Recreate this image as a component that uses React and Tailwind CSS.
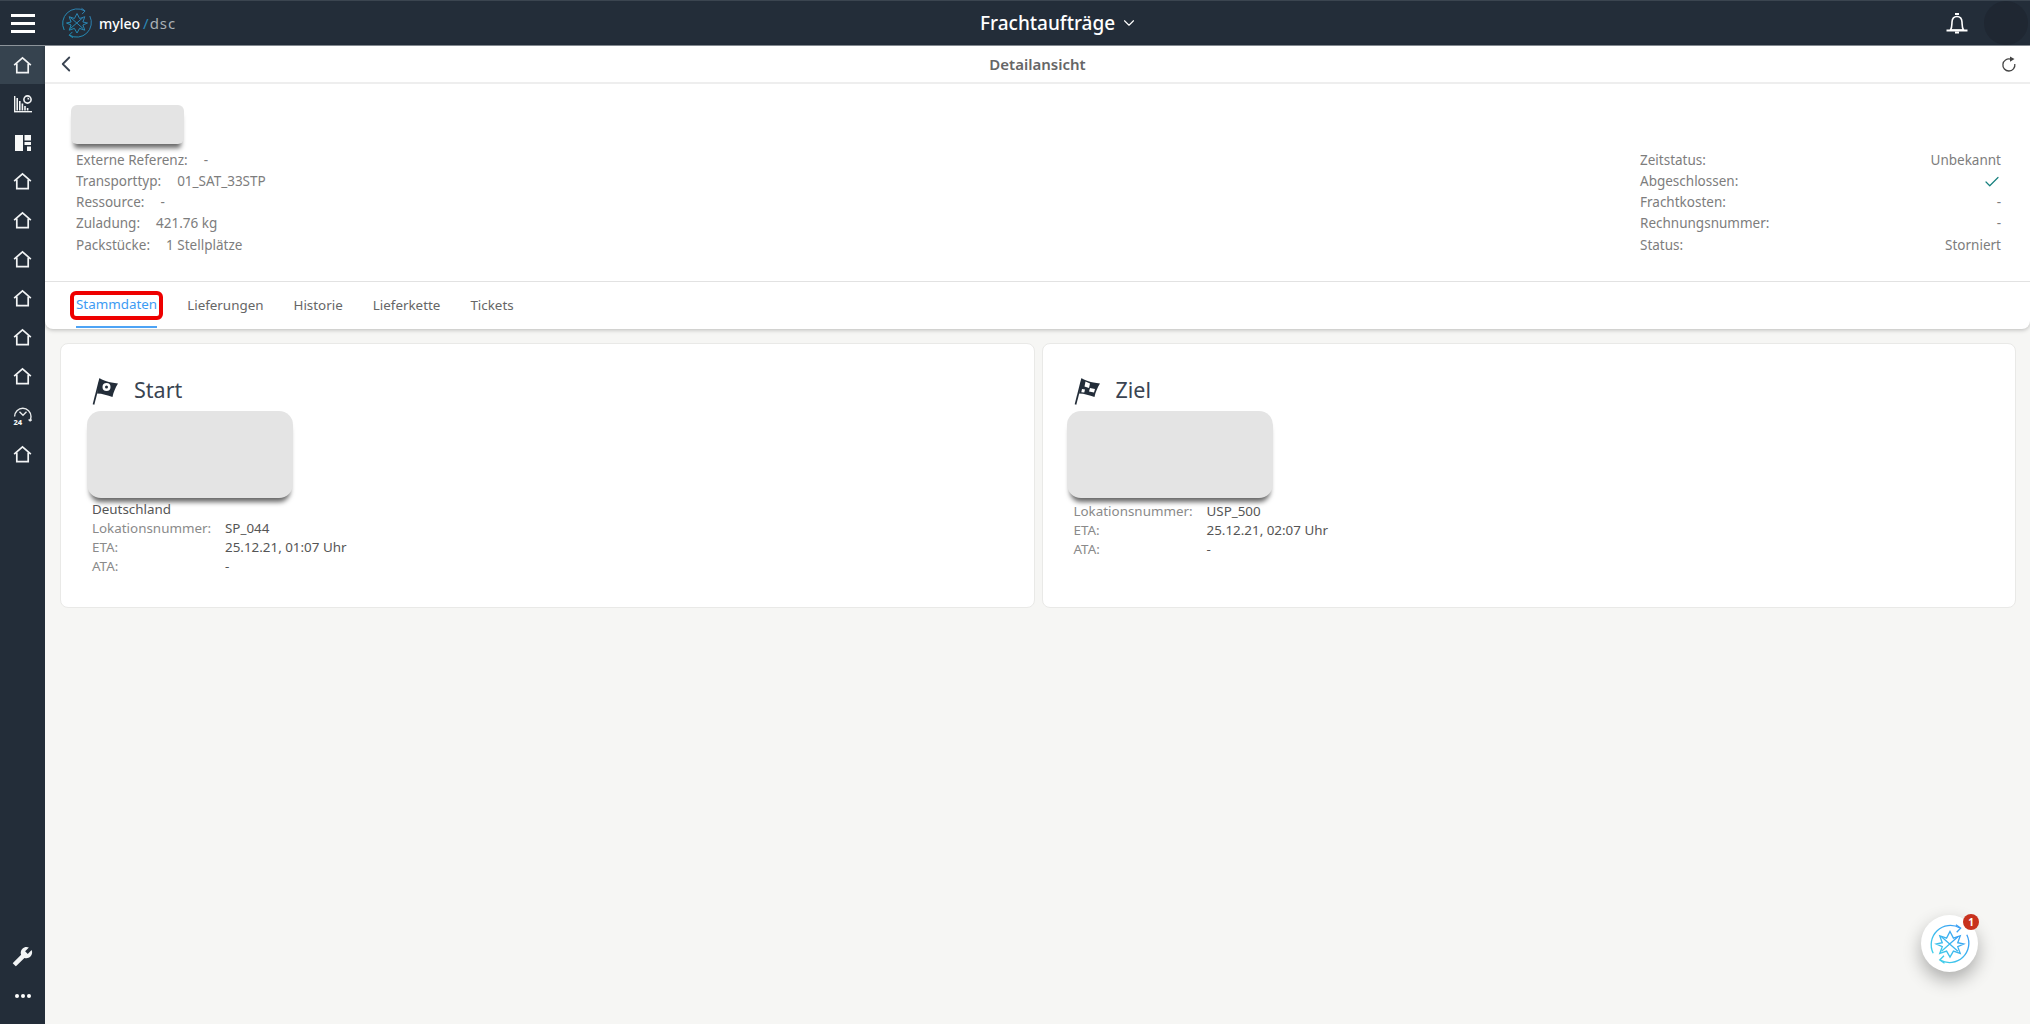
import React from 'react';
import { ChevronLeft, ChevronDown, Check } from 'lucide-react';
import { MdBuild } from 'react-icons/md';

const HomeIcon = () => (
  <svg width="19" height="19" viewBox="0 0 20 20" fill="none" stroke="#f2f4f5" strokeWidth="1.8">
    <path d="M1.2 9.6 10 2l8.8 7.6" />
    <path d="M4 8v9.600h12V8" />
  </svg>
);

const ChartIcon = () => (
  <svg width="20" height="20" viewBox="0 0 20 20" fill="#f2f4f5">
    <rect x="1" y="2" width="1.4" height="16" />
    <rect x="1" y="17" width="18" height="1.4" />
    <path d="M3.400 4H5v12.600H3.400zM6 7h1.600v9.600H6zM8.600 9.500h1.600v7.100H8.600zM11.200 12h1.600v4.600h-1.600zM13.800 14h1.600v2.600h-1.600z" />
    <circle cx="14.5" cy="5.5" r="3.6" fill="none" stroke="#f2f4f5" strokeWidth="1.6" />
    <path d="M14.500 3.600v1.900h1.900a1.900 1.900 0 0 0-1.900-1.900z" />
  </svg>
);

const LayoutIcon = () => (
  <svg width="18" height="18" viewBox="0 0 18 18" fill="#f7f8f8">
    <path d="M1 1h8v16H1zM10.500 1H17v5.500h-6.500zM10.500 8H17v3h-6.500zM13 12.500h4V17h-4z" />
  </svg>
);

const GaugeIcon = () => (
  <svg width="20" height="20" viewBox="0 0 20 20" fill="none" stroke="#e8ebec" strokeWidth="1.4">
    <path d="M1.600 10.500a8.200 8.200 0 0 1 16.400 0c0 1.400-.4 2.600-1 3.600" />
    <path d="m6.500 5.800 3.500 3.400 3.500-3.400" />
    <path d="m15.600 13.400 1.500 1.400 1.600-1.200" />
    <text x="0.5" y="18.5" fontSize="7.5" fontWeight="800" fill="#f2f4f5" stroke="none" fontFamily="'Noto Sans', sans-serif">24</text>
  </svg>
);

const RefreshIcon = () => (
  <svg width="16" height="16" viewBox="0 0 16 16" fill="none" className="mr-[5px]">
    <path d="M9.500 3.200A6 6 0 1 0 13.800 8" stroke="#444" strokeWidth="1.3" />
    <path d="M9 .5 13.500 3 9 5.700z" fill="#444" />
  </svg>
);

const LogoMark = ({ size, from, to, id }) => (
  <svg width={size} height={size} viewBox="0 0 32 32" fill="none">
    <defs>
      <linearGradient id={id} x1="0" y1="1" x2="1" y2="0">
        <stop offset="0" stopColor={from} />
        <stop offset="1" stopColor={to} />
      </linearGradient>
    </defs>
    <g stroke={`url(#${id})`} strokeWidth="1">
      <path d="M23.500 3.800A14.600 14.600 0 0 0 3.200 23" />
      <path d="M8.500 28.200A14.600 14.600 0 0 0 28.800 9" />
      <path d="m20.500 1.300 3.600 2.600-3 3.200M11.400 24.900l-3.200 3.300 3.600 2.500" />
      <path d="M16 6.500l2.600 5 5.200-1.800-1.900 5.300 4.600 1-4.600 2 1.900 5.200-5.200-1.800L16 26l-2.600-4.600-5.200 1.800 1.900-5.200-4.600-2 4.600-1-1.900-5.300 5.200 1.800z" />
      <path d="M9.500 10.500 22 21.500M22 10.500 9.500 21.500" />
    </g>
  </svg>
);

const StartFlag = () => (
  <svg width="27" height="28" viewBox="0 0 27 28">
    <path d="M1.500 27.500 8 2" stroke="#232d39" strokeWidth="1.7" fill="none" />
    <path d="M7.500 1c3.500 2.500 9 4.500 18.500 5.500-2.500 4-4.500 8.500-5.500 13.500-5-1.500-10-3.500-15.500-3.500z" fill="#232d39" />
    <circle cx="14.500" cy="10" r="4" fill="#fff" />
    <circle cx="14.500" cy="10" r="1.500" fill="#232d39" />
  </svg>
);

const GoalFlag = () => (
  <svg width="27" height="28" viewBox="0 0 27 28">
    <path d="M1.500 27.500 8 2" stroke="#232d39" strokeWidth="1.7" fill="none" />
    <path d="M7.500 1c3.500 2.500 9 4.500 18.500 5.500-2.500 4-4.500 8.500-5.500 13.500-5-1.500-10-3.500-15.500-3.500z" fill="#232d39" />
    <path d="M11.500 4.500 16 6.500 15 11l-4.500-1.500zM16 11l5 1-1 3.500-5-1zM8 12l3 .5-.7 3-3-.3z" fill="#fff" />
  </svg>
);

const InfoRow = ({ label, value }) => (
  <div className="flex h-[21.3px] items-center gap-4">
    <span>{label}</span>
    <span>{value}</span>
  </div>
);

const StatusRow = ({ label, children }) => (
  <div className="flex h-[21.3px] items-center justify-between">
    <span>{label}</span>
    <span>{children}</span>
  </div>
);

const Redacted = ({ className }) => (
  <div className={`bg-[#e4e4e4] shadow-[0_7px_5px_-3px_rgba(0,0,0,0.6)] ${className}`} />
);

const LocationCard = ({ title, flag, country, number, eta, offset }) => (
  <section className="h-[265px] flex-1 rounded-lg border border-[#e9e9e7] bg-white pl-[31px] pt-[26px]">
    <div className="flex h-[41px] items-center gap-[15px]">
      {flag}
      <h2 className="text-[21.5px] text-[#3a4452]">{title}</h2>
    </div>
    <Redacted className={`${offset} h-[87px] w-[206px] rounded-[14px]`} />
    <div className={`text-[13.4px] leading-[19px] ${country ? 'mt-[2px]' : 'mt-[4px]'}`}>
      {country && <div className="text-[#555]">{country}</div>}
      <div className="grid grid-cols-[133px_1fr] text-[#555]">
        <span className="text-[#8a8a8a]">Lokationsnummer:</span>
        <span>{number}</span>
        <span className="text-[#8a8a8a]">ETA:</span>
        <span>{eta}</span>
        <span className="text-[#8a8a8a]">ATA:</span>
        <span>-</span>
      </div>
    </div>
  </section>
);

const tabs = ['Stammdaten', 'Lieferungen', 'Historie', 'Lieferkette', 'Tickets'];

export default function App() {
  return (
    <div className="flex h-screen flex-col overflow-hidden bg-[#f6f6f4] font-['Noto_Sans',sans-serif]">
      {/* Top bar */}
      <header className="relative flex h-[46px] shrink-0 items-center border-b border-t border-[#3b4550] border-b-[#8c939a] bg-[#232d39]">
        <div className="flex w-[45px] flex-col items-center gap-[5px]">
          <span className="h-[3px] w-6 bg-white" />
          <span className="h-[3px] w-6 bg-white" />
          <span className="h-[3px] w-6 bg-white" />
        </div>
        <div className="ml-4 flex items-center gap-1.5">
          <LogoMark size={32} from="#1f8fb5" to="#2f7fb0" id="logoTop" />
          <span className="text-[14px] font-medium text-white">myleo</span>
          <span className="-ml-[3px] text-[15px] text-[#2b88b5]">/</span>
          <span className="-ml-[5px] text-[15px] tracking-[1px] text-[#a9b0b6]">dsc</span>
        </div>
        <div className="absolute left-[980px] flex items-center gap-[5px] text-white">
          <span className="text-[19px] font-medium">Frachtaufträge</span>
          <ChevronDown size={18} strokeWidth={1.5} />
        </div>
        <div className="ml-auto flex items-center gap-[15px]">
          <svg width="24" height="24" viewBox="0 0 24 24" fill="none" stroke="#fff" strokeWidth="1.6">
            <path d="M5.500 19c1.500-2 1.300-5 1.500-8 .2-3.500 2-5.500 5-5.500s4.800 2 5 5.500c.2 3 0 6 1.500 8z" />
            <path d="M1.500 19.500h21" strokeWidth="2" />
            <path d="M10 3h4M10 21.500h4" strokeWidth="2" />
          </svg>
          <span className="mr-[2px] size-[44px] rounded-full bg-[#1f2732]" />
        </div>
      </header>

      <div className="flex min-h-0 flex-1">
        {/* Sidebar */}
        <aside className="flex w-[45px] shrink-0 flex-col bg-[#232d39]">
          <div className="flex h-[38px] items-center justify-center bg-[#36434f]"><HomeIcon /></div>
          <div className="flex h-[39px] items-center justify-center"><ChartIcon /></div>
          <div className="flex h-[39px] items-center justify-center"><LayoutIcon /></div>
          {[0, 1, 2, 3, 4, 5].map((n) => (
            <div key={n} className="flex h-[39px] items-center justify-center"><HomeIcon /></div>
          ))}
          <div className="flex h-[39px] items-center justify-center"><GaugeIcon /></div>
          <div className="flex h-[39px] items-center justify-center"><HomeIcon /></div>
          <div className="mt-auto flex h-[39px] items-center justify-center text-[#f2f4f5]">
            <MdBuild size={21} className="-scale-x-100" />
          </div>
          <div className="mb-[9px] flex h-[39px] items-center justify-center gap-[2px]">
            <span className="size-1 rounded-full bg-white" />
            <span className="size-1 rounded-full bg-white" />
            <span className="size-1 rounded-full bg-white" />
          </div>
        </aside>

        {/* Main */}
        <main className="relative min-w-0 flex-1">
          <div className="rounded-b-lg bg-white shadow-[0_1px_4px_rgba(0,0,0,0.25)]">
            <div className="relative flex h-[38px] items-center justify-between border-b-2 border-[#eeeeee] px-2">
              <ChevronLeft size={26} strokeWidth={1.7} className="text-[#3a4452]" />
              <span className="absolute left-0 right-0 text-center text-[15px] font-semibold text-[#666]">Detailansicht</span>
              <RefreshIcon />
            </div>

            <div className="h-[198px] border-b border-[#e2e2e2] pl-[31px] pr-[29px] pt-[21px] text-[13.5px] text-[#7d7d7d]">
              <Redacted className="-ml-[5px] h-[39px] w-[113px] rounded-md" />
              <div className="mt-[5px] flex justify-between">
                <div>
                  <InfoRow label="Externe Referenz:" value="-" />
                  <InfoRow label="Transporttyp:" value="01_SAT_33STP" />
                  <InfoRow label="Ressource:" value="-" />
                  <InfoRow label="Zuladung:" value="421.76 kg" />
                  <InfoRow label="Packstücke:" value="1 Stellplätze" />
                </div>
                <div className="w-[361px]">
                  <StatusRow label="Zeitstatus:">Unbekannt</StatusRow>
                  <StatusRow label="Abgeschlossen:"><Check size={18} strokeWidth={1.6} className="mt-[3px] text-[#17807e]" /></StatusRow>
                  <StatusRow label="Frachtkosten:">-</StatusRow>
                  <StatusRow label="Rechnungsnummer:">-</StatusRow>
                  <StatusRow label="Status:">Storniert</StatusRow>
                </div>
              </div>
            </div>

            <nav className="relative flex h-[47px] gap-[30px] pl-[31px] text-[13.4px] text-[#666]">
              {tabs.map((tab, i) => (
                <div key={tab} className={`flex h-[46px] items-center ${i === 0 ? 'border-b-2 border-[#4da3f5] text-[#3d9bf3]' : ''}`}>
                  {tab}
                </div>
              ))}
              {/* highlight around the active tab */}
              <span className="absolute left-[25px] top-[9px] h-[29px] w-[93px] rounded-md border-4 border-[#ee0000]" />
            </nav>
          </div>

          <div className="flex gap-[7px] pl-[15px] pr-[14px] pt-[14px]">
            <LocationCard title="Start" flag={<StartFlag />} country="Deutschland" number="SP_044" eta="25.12.21, 01:07 Uhr" offset="-ml-[5px]" />
            <LocationCard title="Ziel" flag={<GoalFlag />} number="USP_500" eta="25.12.21, 02:07 Uhr" offset="-ml-[7px]" />
          </div>

          {/* Floating helper button */}
          <button className="absolute bottom-[52px] right-[52px] flex size-[57px] items-center justify-center rounded-full bg-white shadow-[0_8px_18px_rgba(0,0,0,0.3)]">
            <LogoMark size={42} from="#3fd0e8" to="#3a9cf5" id="logoFab" />
            <span className="absolute -right-[1px] -top-[1px] flex size-4 items-center justify-center rounded-full bg-[#c8321e] text-[10px] font-bold text-white">1</span>
          </button>
        </main>
      </div>
    </div>
  );
}
